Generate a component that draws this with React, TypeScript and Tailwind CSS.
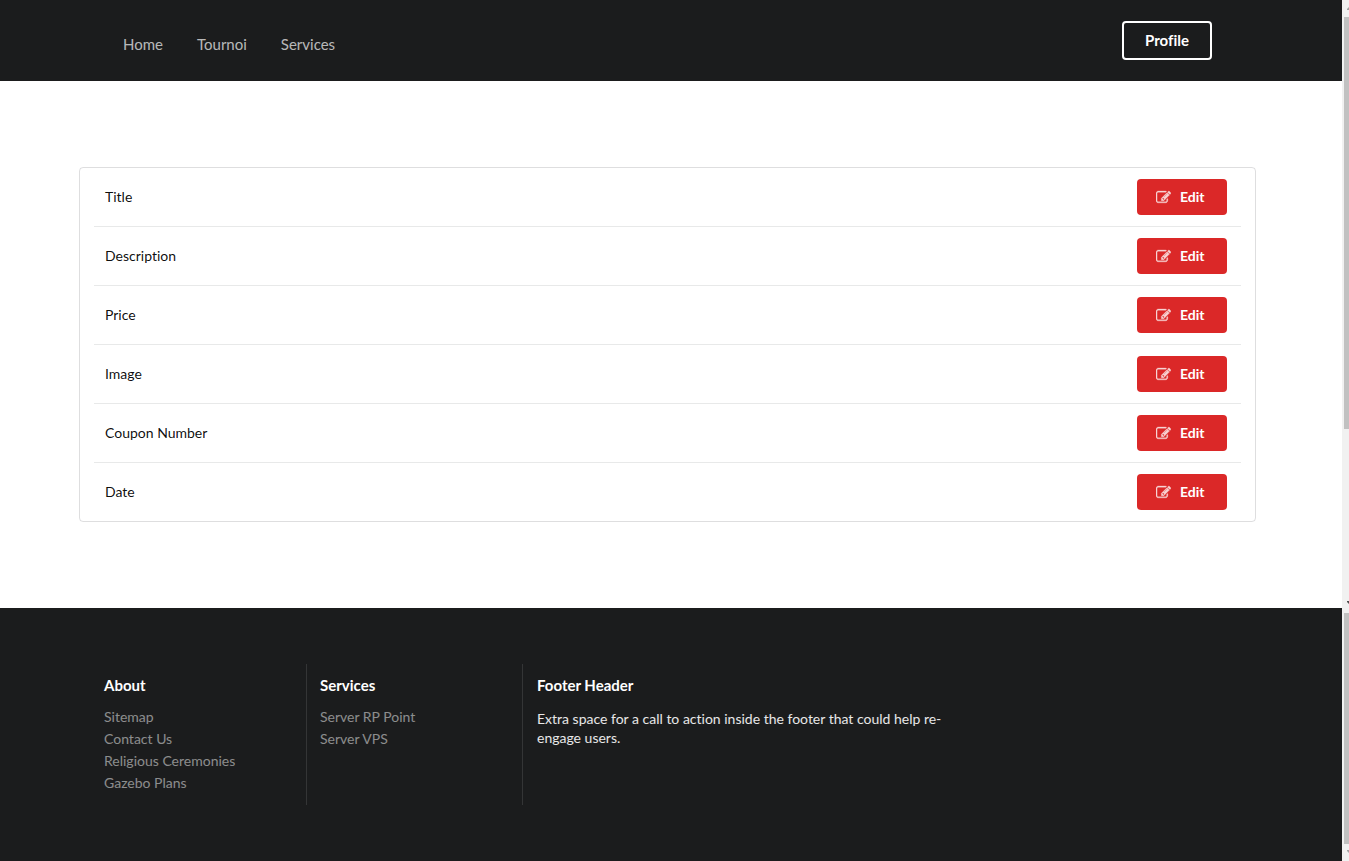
const navLinks: string[] = ["Home", "Tournoi", "Services"];

const fields: string[] = ["Title", "Description", "Price", "Image", "Coupon Number", "Date"];

const footerLists = [
    { title: "About", links: ["Sitemap", "Contact Us", "Religious Ceremonies", "Gazebo Plans"] },
    { title: "Services", links: ["Server RP Point", "Server VPS"] },
];

const EditIcon = () => (
    <svg viewBox="0 0 1792 1792" className="size-[15px] fill-current stroke-current stroke-[40] opacity-80" aria-hidden="true">
        <path d="M888 1184l116-116-152-152-116 116v56h96v96h56zm440-720q-16-16-33 1l-350 350q-17 17-1 33t33-1l350-350q17-17 1-33zm80 594v190q0 119-84.5 203.5t-203.5 84.5h-832q-119 0-203.5-84.5t-84.5-203.5v-832q0-119 84.5-203.5t203.5-84.5h832q63 0 117 25 15 7 18 23 3 17-9 29l-49 49q-14 14-32 8-23-6-45-6h-832q-66 0-113 47t-47 113v832q0 66 47 113t113 47h832q66 0 113-47t47-113v-126q0-13 9-22l64-64q15-15 35-7t20 29zm-96-738l288 288-672 672h-288v-288zm444 132l-92 92-288-288 92-92q28-28 68-28t68 28l152 152q28 28 28 68t-28 68z" />
    </svg>
);

const Header = () => (
    <header className="bg-[#1b1c1d] px-8">
        <div className="mx-auto flex h-[81px] w-full max-w-[1128px] items-center justify-between pr-[23px] pl-4">
            <nav className="flex gap-[34px] pt-[6px] text-[15px] leading-5 text-white/70">
                {navLinks.map((link) => (
                    <a key={link} href="#" className="hover:text-white">{link}</a>
                ))}
            </nav>
            <button className="h-[39px] w-[90px] rounded border-2 border-white pb-[2px] text-[15px] leading-5 font-bold text-white">
                Profile
            </button>
        </div>
    </header>
);

const FieldTable = () => (
    <div className="rounded border border-[#22242626] px-[14px]">
        <table className="w-full border-collapse text-sm text-black/95">
            <tbody className="divide-y divide-[#e8e9e9]">
                {fields.map((field) => (
                    <tr key={field}>
                        <td className="px-[11px]">{field}</td>
                        <td className="py-[11px] pr-[14px]">
                            <button
                                aria-label={`Edit ${field}`}
                                className="ml-auto flex h-9 w-[90px] items-center gap-[9px] rounded bg-[#db2828] pl-[19px] font-bold text-white"
                            >
                                <EditIcon />
                                Edit
                            </button>
                        </td>
                    </tr>
                ))}
            </tbody>
        </table>
    </div>
);

const Footer = () => (
    <footer className="flex-1 bg-[#1b1c1d] py-14 pr-8 pl-[90px] text-sm text-white">
        <div className="flex">
            {footerLists.map((list) => (
                <div
                    key={list.title}
                    className="min-h-[141px] w-[216px] border-l border-[#343536] px-[13px] pt-[11px] first:border-transparent"
                >
                    <h4 className="text-[15px] leading-5 font-bold">{list.title}</h4>
                    <ul className="pt-[11px] leading-[22px] text-white/50">
                        {list.links.map((link) => (
                            <li key={link}>
                                <a href="#" className="hover:text-white">{link}</a>
                            </li>
                        ))}
                    </ul>
                </div>
            ))}
            <div className="w-[450px] border-l border-[#343536] px-[14px] pt-[11px]">
                <h4 className="text-[15px] leading-5 font-bold">Footer Header</h4>
                <p className="pt-[14px] leading-[19px] text-white/90">
                    Extra space for a call to action inside the footer that could help re-engage users.
                </p>
            </div>
        </div>
    </footer>
);

const App = () => {
    return (
        <div className="flex min-h-screen flex-col bg-white font-['Lato',sans-serif] [font-variant-ligatures:none]">
            <div className="flex">
                <div className="flex-1">
                    <Header />
                    <main className="py-[86px] pr-[86px] pl-[79px]">
                        <FieldTable />
                    </main>
                </div>
                {/* scroll rail of the content */}
                <div className="flex w-[7px] flex-col bg-[#f1f1f1]" aria-hidden="true">
                    <div className="flex h-[17px] items-center justify-end">
                        <svg viewBox="0 0 2 3" className="h-[3px] w-[2px] fill-[#a3a3a3]"><path d="M2 0v3H0V2z" /></svg>
                    </div>
                    <div className="ml-[2px] grow-71 bg-[#c1c1c1]" />
                    <div className="grow-29" />
                    <div className="flex h-[11px] items-center justify-end">
                        <svg viewBox="0 0 2 3" className="h-[3px] w-[2px] fill-[#505050]"><path d="M2 3V0H0V1z" /></svg>
                    </div>
                </div>
            </div>
            <div className="flex flex-1">
                <Footer />
                {/* scroll rail of the footer */}
                <div className="flex w-[7px] flex-col bg-[#f1f1f1] pt-[5px]" aria-hidden="true">
                    <div className="ml-[2px] flex-1 bg-[#c1c1c1]" />
                    <div className="flex h-[17px] items-center justify-end pb-[3px]">
                        <svg viewBox="0 0 2 3" className="h-[3px] w-[2px] fill-[#a3a3a3]"><path d="M2 3V0H0V1z" /></svg>
                    </div>
                </div>
            </div>
        </div>
    );
};

export default App;
